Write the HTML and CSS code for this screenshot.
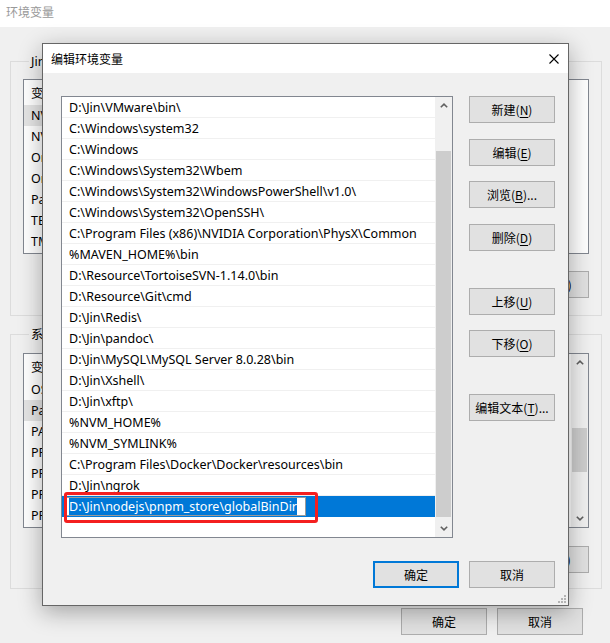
FILE: index.html
```html
<!DOCTYPE html>
<html lang="zh-CN">
<head>
<meta charset="utf-8">
<title>编辑环境变量</title>
<link rel="stylesheet" href="styles.css">
</head>
<body>
<div class="bgwin">
  <div class="bg-title">环境变量</div>
  <div class="bg-body">
    <fieldset class="group group-user">
      <legend>Jin 的用户变量(<u>U</u>)</legend>
      <div class="lv">
        <div class="lv-items">
          <div class="lv-head"><span class="c1">变量</span><span>值</span></div>
          <div class="lv-row hl"><span class="c1">NVM_HOME</span><span class="c2">D:\Jin\nvm</span></div>
          <div class="lv-row"><span class="c1">NVM_SYMLINK</span><span class="c2">D:\Jin\nodejs</span></div>
          <div class="lv-row"><span class="c1">OneDrive</span><span class="c2">C:\Users\Jin\OneDrive</span></div>
          <div class="lv-row"><span class="c1">OneDriveConsumer</span><span class="c2">C:\Users\Jin\OneDrive</span></div>
          <div class="lv-row"><span class="c1">Path</span><span class="c2">%USERPROFILE%\AppData\Local\Microsoft\WindowsApps;</span></div>
          <div class="lv-row"><span class="c1">TEMP</span><span class="c2">%USERPROFILE%\AppData\Local\Temp</span></div>
          <div class="lv-row"><span class="c1">TMP</span><span class="c2">%USERPROFILE%\AppData\Local\Temp</span></div>
        </div>
      </div>
      <div class="grp-btns">
        <button class="btn">新建(<u>N</u>)...</button>
        <button class="btn">编辑(<u>E</u>)...</button>
        <button class="btn">删除(<u>D</u>)</button>
      </div>
    </fieldset>
    <fieldset class="group group-sys">
      <legend>系统变量(<u>S</u>)</legend>
      <div class="lv">
        <div class="lv-items">
          <div class="lv-head"><span class="c1">变量</span><span>值</span></div>
          <div class="lv-row"><span class="c1">OS</span><span class="c2">Windows_NT</span></div>
          <div class="lv-row hl"><span class="c1">Path</span><span class="c2">D:\Jin\VMware\bin\;C:\Windows\system32;</span></div>
          <div class="lv-row"><span class="c1">PATHEXT</span><span class="c2">.COM;.EXE;.BAT;.CMD;.VBS;.VBE;.JS;.JSE;.WSF;.WSH;.MSC</span></div>
          <div class="lv-row"><span class="c1">PROCESSOR_ARCHITECTURE</span><span class="c2">AMD64</span></div>
          <div class="lv-row"><span class="c1">PROCESSOR_IDENTIFIER</span><span class="c2">Intel64 Family 6</span></div>
          <div class="lv-row"><span class="c1">PROCESSOR_LEVEL</span><span class="c2">6</span></div>
          <div class="lv-row"><span class="c1">PROCESSOR_REVISION</span><span class="c2">9e0a</span></div>
        </div>
        <div class="vscroll small">
          <span class="arrow"><svg width="8" height="5" viewBox="0 0 8 5"><polyline points="0.8,4.3 4,1.2 7.2,4.3" fill="none" stroke="#606060" stroke-width="1.6"/></svg></span>
          <div class="track"><div class="thumb"></div></div>
          <span class="arrow"><svg width="8" height="5" viewBox="0 0 8 5"><polyline points="0.8,0.7 4,3.8 7.2,0.7" fill="none" stroke="#606060" stroke-width="1.6"/></svg></span>
        </div>
      </div>
      <div class="grp-btns">
        <button class="btn">新建(<u>W</u>)...</button>
        <button class="btn">编辑(<u>I</u>)...</button>
        <button class="btn">删除(<u>L</u>)</button>
      </div>
    </fieldset>
    <div class="bg-foot">
      <button class="btn btn-foot">确定</button>
      <button class="btn btn-foot">取消</button>
    </div>
  </div>
</div>

<div class="dlg">
  <div class="dlg-title">
    <span>编辑环境变量</span>
    <svg class="close" width="10" height="10" viewBox="0 0 10 10"><path d="M0.5 0.5 L9.5 9.5 M9.5 0.5 L0.5 9.5" stroke="#000" stroke-width="1.1" fill="none"/></svg>
  </div>
  <div class="dlg-body">
    <div class="dlg-main">
      <div class="paths">
        <div class="path-items">
          <div class="prow">D:\Jin\VMware\bin\</div>
          <div class="prow">C:\Windows\system32</div>
          <div class="prow">C:\Windows</div>
          <div class="prow">C:\Windows\System32\Wbem</div>
          <div class="prow">C:\Windows\System32\WindowsPowerShell\v1.0\</div>
          <div class="prow">C:\Windows\System32\OpenSSH\</div>
          <div class="prow">C:\Program Files (x86)\NVIDIA Corporation\PhysX\Common</div>
          <div class="prow">%MAVEN_HOME%\bin</div>
          <div class="prow">D:\Resource\TortoiseSVN-1.14.0\bin</div>
          <div class="prow">D:\Resource\Git\cmd</div>
          <div class="prow">D:\Jin\Redis\</div>
          <div class="prow">D:\Jin\pandoc\</div>
          <div class="prow">D:\Jin\MySQL\MySQL Server 8.0.28\bin</div>
          <div class="prow">D:\Jin\Xshell\</div>
          <div class="prow">D:\Jin\xftp\</div>
          <div class="prow">%NVM_HOME%</div>
          <div class="prow">%NVM_SYMLINK%</div>
          <div class="prow">C:\Program Files\Docker\Docker\resources\bin</div>
          <div class="prow">D:\Jin\ngrok</div>
          <div class="prow selected"><span class="edit"><span class="sel">D:\Jin\nodejs\pnpm_store\globalBinDir</span></span></div>
        </div>
        <div class="vscroll big">
          <span class="arrow"><svg width="8" height="5" viewBox="0 0 8 5"><polyline points="0.8,4.3 4,1.2 7.2,4.3" fill="none" stroke="#606060" stroke-width="1.6"/></svg></span>
          <div class="track"><div class="thumb"></div></div>
          <span class="arrow"><svg width="8" height="5" viewBox="0 0 8 5"><polyline points="0.8,0.7 4,3.8 7.2,0.7" fill="none" stroke="#606060" stroke-width="1.6"/></svg></span>
        </div>
      </div>
      <div class="side-btns">
        <button class="btn">新建(<u>N</u>)</button>
        <button class="btn">编辑(<u>E</u>)</button>
        <button class="btn">浏览(<u>B</u>)...</button>
        <button class="btn">删除(<u>D</u>)</button>
        <button class="btn far">上移(<u>U</u>)</button>
        <button class="btn">下移(<u>O</u>)</button>
        <button class="btn far">编辑文本(<u>T</u>)...</button>
      </div>
    </div>
    <div class="dlg-foot">
      <button class="btn default">确定</button>
      <button class="btn">取消</button>
    </div>
  </div>
  <svg class="grip" width="9" height="9" viewBox="0 0 9 9">
    <rect x="7" y="1" width="2" height="2" fill="#b4b4b4"/>
    <rect x="4" y="4" width="2" height="2" fill="#b4b4b4"/>
    <rect x="7" y="4" width="2" height="2" fill="#b4b4b4"/>
    <rect x="1" y="7" width="2" height="2" fill="#b4b4b4"/>
    <rect x="4" y="7" width="2" height="2" fill="#b4b4b4"/>
    <rect x="7" y="7" width="2" height="2" fill="#b4b4b4"/>
  </svg>
</div>

<div class="annot"></div>
</body>
</html>
```

FILE: styles.css
```css
* { box-sizing: border-box; }

html, body {
  margin: 0;
  padding: 0;
}

body {
  width: 610px;
  height: 643px;
  overflow: hidden;
  position: relative;
  background: #f0f0f0;
  font-family: "Noto Sans", "Noto Sans CJK SC", sans-serif;
  font-size: 12.5px;
  color: #000;
}

u { text-decoration: underline; text-underline-offset: 2px; }

/* ---------- background window ---------- */
.bgwin {
  width: 610px;
  height: 643px;
  display: flex;
  flex-direction: column;
}

.bg-title {
  height: 27px;
  background: #fff;
  color: #999;
  font-family: "Noto Sans CJK SC", sans-serif;
  font-size: 12px;
  line-height: 24px;
  padding-left: 6px;
}

.bg-body {
  flex: 1;
  padding: 26px 8px 0 10px;
  display: flex;
  flex-direction: column;
}

.group {
  margin: 0;
  border: 1px solid #dcdcdc;
  padding: 9px 12px 17px 12px;
  display: flex;
  flex-direction: column;
  min-width: 0;
}

.group legend {
  margin-left: 6px;
  padding: 0 2px;
  line-height: 17px;
  font-size: 12.5px;
  font-family: "Noto Sans", "Noto Sans CJK SC", sans-serif;
}

.group-sys {
  margin-top: 10px;
  padding-top: 10px;
  padding-bottom: 15px;
}

.lv {
  height: 175px;
  border: 1px solid #828790;
  background: #fff;
  display: flex;
}

.lv-items {
  flex: 1;
  overflow: hidden;
}

.lv-head, .lv-row {
  display: flex;
  white-space: nowrap;
  padding-left: 7px;
}

.lv-head {
  height: 25px;
  line-height: 25px;
  font-family: "Noto Sans CJK SC", sans-serif;
}

.lv-row {
  height: 21px;
  line-height: 21px;
  width: 520px;
}

.lv-row.hl { background: #e5e5e5; }

.c1 { width: 170px; flex: none; }
.c2 { overflow: hidden; }

.grp-btns {
  display: flex;
  justify-content: flex-end;
  gap: 8px;
  margin-top: 17px;
}

.grp-btns .btn { width: 75px; }

.group-sys .grp-btns { margin-top: 18px; }

.bg-foot {
  display: flex;
  justify-content: flex-end;
  gap: 10px;
  margin-top: 19px;
  padding-right: 19px;
}

.btn-foot { width: 85px; }

/* ---------- buttons ---------- */
.btn {
  height: 27px;
  width: 86px;
  padding: 0;
  background: #e1e1e1;
  border: 1px solid #adadad;
  border-radius: 0;
  font-family: "Noto Sans CJK SC", sans-serif;
  font-size: 12px;
  color: #000;
  line-height: 1;
}

.btn.default {
  border: 2px solid #0078d7;
}

/* ---------- scrollbars ---------- */
.vscroll {
  width: 17px;
  flex: none;
  background: #f0f0f0;
  display: flex;
  flex-direction: column;
}

.vscroll .arrow {
  height: 17px;
  display: flex;
  align-items: center;
  justify-content: center;
}

.vscroll .track {
  flex: 1;
  display: flex;
  flex-direction: column;
}

.vscroll .thumb {
  background: #cdcdcd;
  margin: 0 1px;
}

.vscroll.small .thumb {
  margin-top: 57px;
  height: 44px;
}

.vscroll.big .thumb {
  margin-top: 37px;
  flex: 1;
  margin-bottom: 3px;
}

/* ---------- dialog ---------- */
.dlg {
  position: absolute;
  left: 42px;
  top: 43px;
  width: 527px;
  height: 563px;
  border: 1px solid #666;
  background: #f0f0f0;
  display: flex;
  flex-direction: column;
  box-shadow: 0 6px 22px rgba(0, 0, 0, 0.32);
}

.dlg-title {
  height: 29px;
  background: #fff;
  display: flex;
  align-items: center;
  padding: 0 9px 0 8px;
  font-family: "Noto Sans CJK SC", sans-serif;
  font-size: 12px;
}

.dlg-title .close { margin-left: auto; margin-top: 1px; }

.dlg-body {
  flex: 1;
  padding: 23px 13px 17px 18px;
  display: flex;
  flex-direction: column;
}

.dlg-main {
  display: flex;
  gap: 16px;
}

.paths {
  width: 392px;
  height: 442px;
  border: 1px solid #828790;
  background: #fff;
  display: flex;
}

.path-items {
  flex: 1;
  overflow: hidden;
}

.prow {
  height: 21px;
  line-height: 20px;
  padding-top: 1px;
  border-bottom: 1px solid #f0f0f0;
  padding-left: 7px;
  white-space: nowrap;
}

.prow.selected {
  background: #0078d7;
  border-bottom-color: #0078d7;
  padding-left: 4px;
  padding-top: 1px;
}

.edit {
  display: inline-block;
  height: 19px;
  line-height: 17px;
  background: #fff;
  border: 1px solid #9a9a9a;
  padding: 0 8px 0 2px;
  vertical-align: top;
}

.sel {
  background: #0078d7;
  color: #fff;
  display: inline-block;
  height: 17px;
}

.side-btns {
  width: 86px;
  display: flex;
  flex-direction: column;
  gap: 15px;
}

.side-btns .btn:nth-child(2),
.side-btns .btn:nth-child(4) { margin-top: 1px; }

.side-btns .btn.far { margin-top: 22px; }

.dlg-foot {
  margin-top: auto;
  display: flex;
  justify-content: flex-end;
  gap: 10px;
}

.grip {
  position: absolute;
  right: 2px;
  bottom: 2px;
}

/* ---------- annotation ---------- */
.annot {
  position: absolute;
  left: 64px;
  top: 492px;
  width: 254px;
  height: 31px;
  border: 3px solid #f41f1f;
  border-radius: 3px;
}
```
